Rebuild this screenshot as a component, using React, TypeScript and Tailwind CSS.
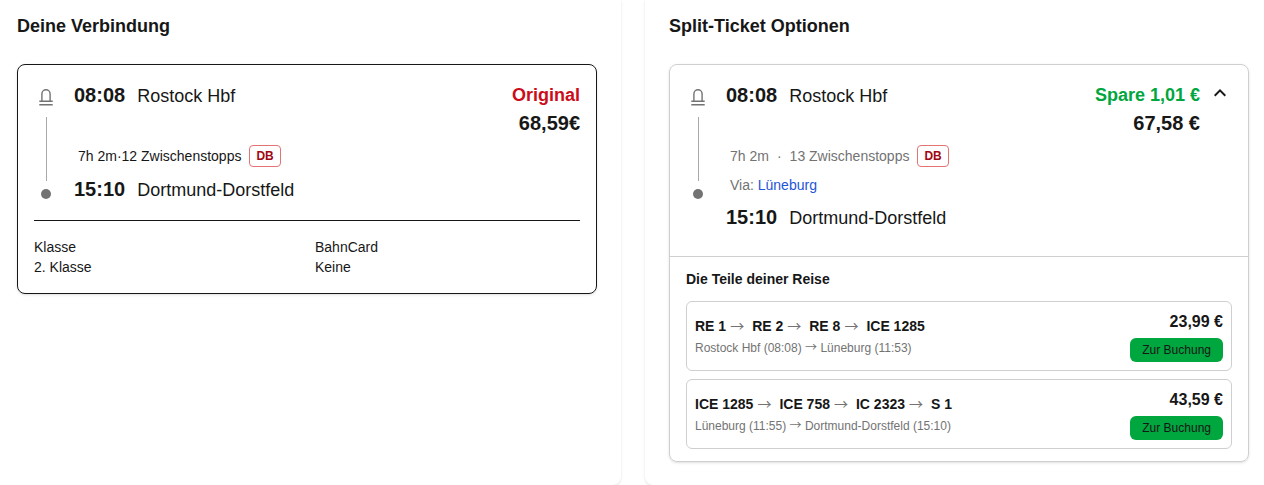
import { useState, type ReactNode } from 'react';
import { MdExpandLess } from 'react-icons/md';

interface Segment {
  trains: string[];
  from: string;
  to: string;
  price: string;
}

const segments: Segment[] = [
  {
    trains: ['RE 1', 'RE 2', 'RE 8', 'ICE 1285'],
    from: 'Rostock Hbf (08:08)',
    to: 'Lüneburg (11:53)',
    price: '23,99 €',
  },
  {
    trains: ['ICE 1285', 'ICE 758', 'IC 2323', 'S 1'],
    from: 'Lüneburg (11:55)',
    to: 'Dortmund-Dorstfeld (15:10)',
    price: '43,59 €',
  },
];

function StationIcon() {
  return (
    <svg viewBox="0 0 24 24" className="size-6" fill="none" stroke="currentColor" aria-hidden="true">
      <path d="M7.9 16V8.8a4.1 4.1 0 0 1 8.2 0V16" strokeWidth="1.4" />
      <path d="M5.3 16.2h13.4M5.3 19.8h13.4" strokeWidth="1.6" />
    </svg>
  );
}

function Timeline() {
  return (
    <div className="flex w-6 shrink-0 flex-col items-center pt-1 text-[#737373]">
      <StationIcon />
      <div className="mt-2 h-16 w-px bg-[#a8a8a8]" />
      <div className="mt-2 size-2.5 rounded-full bg-[#737373]" />
    </div>
  );
}

function Stop({ time, name }: { time: string; name: string }) {
  return (
    <div className="flex items-baseline gap-3">
      <span className="text-xl leading-7 font-bold">{time}</span>
      <span className="text-lg leading-7">{name}</span>
    </div>
  );
}

function OperatorBadge() {
  return (
    <span className="rounded-sm border border-[#e57373] px-1.5 py-0.5 text-xs font-bold text-[#9f0712]">DB</span>
  );
}

function Arrow() {
  return <span className="font-['Noto_Sans_CJK_JP',sans-serif] leading-none font-normal">→</span>;
}

function Panel({ title, children }: { title: string; children: ReactNode }) {
  return (
    <section className="rounded-b-lg bg-white px-6 pt-3 pb-[23px] shadow-sm">
      <h2 className="mb-6 text-lg leading-7 font-bold">{title}</h2>
      {children}
    </section>
  );
}

function OriginalConnection() {
  return (
    <div className="rounded-lg border border-[#171717] p-4 shadow-sm">
      <div className="flex gap-4">
        <Timeline />
        <div className="flex-1">
          <div className="flex items-start justify-between">
            <Stop time="08:08" name="Rostock Hbf" />
            <div className="text-right font-bold">
              <div className="text-lg leading-7 text-[#cc0c18]">Original</div>
              <div className="text-xl leading-7">68,59€</div>
            </div>
          </div>
          <div className="my-2 flex items-center gap-2 pl-1 text-sm">
            <span>7h 2m·12 Zwischenstopps</span>
            <OperatorBadge />
          </div>
          <Stop time="15:10" name="Dortmund-Dorstfeld" />
        </div>
      </div>
      <dl className="mt-4 grid grid-cols-2 gap-4 border-t border-[#171717] pt-4 text-sm">
        <div>
          <dt>Klasse</dt>
          <dd>2. Klasse</dd>
        </div>
        <div>
          <dt>BahnCard</dt>
          <dd>Keine</dd>
        </div>
      </dl>
    </div>
  );
}

function SegmentCard({ segment }: { segment: Segment }) {
  return (
    <li className="flex items-center justify-between rounded-md border border-[#cfcfcf] p-2">
      <div>
        <div className="flex gap-1 text-sm font-bold">
          {segment.trains.map((train, i) => (
            <span key={train} className="flex items-baseline gap-1">
              {i > 0 && (
                <span className="pr-1 text-[#737373]">
                  <Arrow />
                </span>
              )}
              {train}
            </span>
          ))}
        </div>
        <div className="mt-1 text-xs text-[#737373]">
          {segment.from} <Arrow /> {segment.to}
        </div>
      </div>
      <div className="flex flex-col items-end gap-1">
        <span className="text-base leading-6 font-bold">{segment.price}</span>
        <button type="button" className="rounded-md bg-[#00a63e] px-3 py-1 text-xs hover:bg-[#008236]">
          Zur Buchung
        </button>
      </div>
    </li>
  );
}

function SplitOption() {
  const [open, setOpen] = useState(true);

  return (
    <div className="rounded-lg border border-[#cfcfcf] shadow-sm">
      <div className="flex gap-4 px-4 pt-4 pb-6">
        <Timeline />
        <div className="flex-1">
          <div className="flex items-start justify-between">
            <Stop time="08:08" name="Rostock Hbf" />
            <div className="flex items-start gap-2">
              <div className="text-right font-bold">
                <div className="text-lg leading-7 text-[#00a63e]">Spare 1,01 €</div>
                <div className="text-xl leading-7">67,58 €</div>
              </div>
              <button
                type="button"
                aria-expanded={open}
                aria-label="Details anzeigen"
                onClick={() => setOpen(!open)}
              >
                <MdExpandLess className={open ? 'size-6' : 'size-6 rotate-180'} />
              </button>
            </div>
          </div>
          <div className="my-2 flex items-center gap-2 pl-1 text-sm text-[#737373]">
            <span>7h 2m</span>
            <span>·</span>
            <span>13 Zwischenstopps</span>
            <OperatorBadge />
          </div>
          <div className="mb-2 pl-1 text-sm text-[#737373]">
            Via: <span className="text-[#1d55d8]">Lüneburg</span>
          </div>
          <Stop time="15:10" name="Dortmund-Dorstfeld" />
        </div>
      </div>
      {open && (
        <div className="border-t border-[#cfcfcf] px-4 py-3">
          <h3 className="mb-3 text-sm font-bold">Die Teile deiner Reise</h3>
          <ul className="flex flex-col gap-2">
            {segments.map((segment) => (
              <SegmentCard key={segment.from} segment={segment} />
            ))}
          </ul>
        </div>
      )}
    </div>
  );
}

export default function App() {
  return (
    <main className="overflow-hidden bg-white font-['Liberation_Sans',Arial,sans-serif] text-[#171717]">
      <div className="-mr-[9px] -ml-[7px] grid grid-cols-2 gap-6">
        <Panel title="Deine Verbindung">
          <OriginalConnection />
        </Panel>
        <Panel title="Split-Ticket Optionen">
          <SplitOption />
        </Panel>
      </div>
    </main>
  );
}
